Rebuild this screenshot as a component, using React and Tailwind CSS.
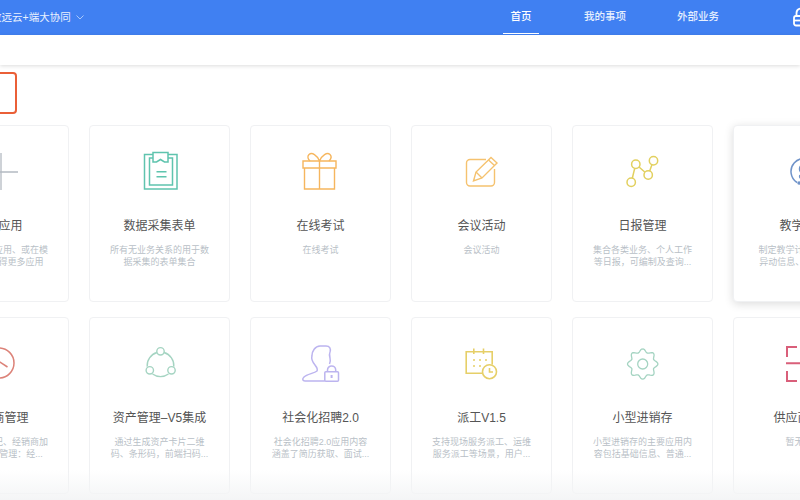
import React from 'react';

// rounded 8 tooth outline for the gear
const gearPath = Array.from({ length: 97 }, (_, i) => {
  const t = (i / 96) * Math.PI * 2;
  const r = 13.5 + 1.7 * Math.cos(8 * t);
  const x = 21.7 + r * Math.sin(t);
  const y = 21 - r * Math.cos(t);
  return `${i === 0 ? 'M' : 'L'}${x.toFixed(2)} ${y.toFixed(2)}`;
}).join('');

// line icons, all drawn on a 44x44 box
const ClipboardIcon = () => (
  <svg width="44" height="44" viewBox="0 0 44 44" className="text-[#5fc4ae]" fill="none" stroke="currentColor" strokeWidth="1.5">
    <path d="M15 3.500H6.500V38H39V3.500H30" />
    <path d="M15 1.500H30V11H26.500L22.500 8.500 18.500 11H15Z" />
    <path d="M15 7H11.500V34H34.500V7H30" />
    <path d="M18.500 20.700h10M18.500 25.700h10" />
  </svg>
);

const GiftIcon = () => (
  <svg width="44" height="44" viewBox="0 0 44 44" className="text-[#f6b65e]" fill="none" stroke="currentColor" strokeWidth="1.4">
    <path d="M4 10H37V17H4Z" />
    <path d="M5.500 17V38H35.500V17" />
    <path d="M20.500 10V38" />
    <path d="M20.500 10C18 4 13 1 10 3.500 8 5.500 9 8 11 10M20.500 10C23 4 28 1 31 3.500 33 5.500 32 8 30 10" />
  </svg>
);

const EditIcon = () => (
  <svg width="44" height="44" viewBox="0 0 44 44" className="text-[#f5c26f]" fill="none" stroke="currentColor" strokeWidth="1.4">
    <path d="M26 8.500H10A3.500 3.500 0 0 0 6.500 12V31.500A3.500 3.500 0 0 0 10 35H31A3.500 3.500 0 0 0 34.500 31.500V18" />
    <path d="M13.500 30L16 21 31 6.500 37 12 22 27Z" />
    <path d="M28.500 9L34.500 14.500M16 21L22 27" />
  </svg>
);

const NodesIcon = () => (
  <svg width="44" height="44" viewBox="0 0 44 44" className="text-[#e2d05f]" fill="none" stroke="currentColor" strokeWidth="1.500">
    <circle cx="10.200" cy="31.300" r="4.200" />
    <circle cx="14.800" cy="13.300" r="4.200" />
    <circle cx="27.200" cy="24" r="4.200" />
    <circle cx="32.500" cy="9.700" r="4.200" />
    <path d="M11.300 27.200L13.700 17.400M18 16L24 21.300M28.700 20L31 13.600" />
  </svg>
);

const TeachIcon = () => (
  <svg width="44" height="44" viewBox="0 0 44 44" className="text-[#6f93c9]" fill="none" stroke="currentColor" strokeWidth="1.500">
    <path d="M15 31.500A13 13 0 1 1 29 31.500" />
    <circle cx="22" cy="18" r="4.500" />
    <path d="M18 24c-1 2 0 4 4 4s5-2 4-4" />
    <circle cx="17" cy="32" r="1" fill="currentColor" />
  </svg>
);

const ClockIcon = () => (
  <svg width="44" height="44" viewBox="0 0 44 44" className="text-[#dc8278]" fill="none" stroke="currentColor" strokeWidth="1.500">
    <circle cx="22" cy="20" r="15" />
    <path d="M22 18.500L30.500 24" />
  </svg>
);

const ShareIcon = () => (
  <svg width="44" height="44" viewBox="0 0 44 44" className="text-[#a5d4c2]" fill="none" stroke="currentColor" strokeWidth="1.400">
    <circle cx="22.500" cy="8.300" r="3.700" />
    <circle cx="11.800" cy="27.300" r="3.700" />
    <circle cx="33.500" cy="27.300" r="3.700" />
    <path d="M19 9.500A13.500 13.500 0 0 0 9.200 23.600M26 9.500A13.500 13.500 0 0 1 35.800 23.600M14.500 31A13.500 13.500 0 0 0 30.500 31" />
  </svg>
);

const UserLockIcon = () => (
  <svg width="44" height="44" viewBox="0 0 44 44" className="text-[#bcb4ef]" fill="none" stroke="currentColor" strokeWidth="1.500">
    <path d="M25.800 38H6c-2.500 0-3-2-1-4 3-3 10-3.500 13-6 1-2 0-3.500-2-6-2.500-3-4-6-3-9.500 0-4 3-9.500 8-9.500h6c4 0 5 3 4 6-1 2-.5 4 0 6 .5 2 .5 4-.5 6" />
    <rect x="25.800" y="28.700" width="13.700" height="9.600" rx="1" />
    <path d="M28.500 28.700v-1.700a4.100 4.100 0 0 1 8.200 0v1.700" />
    <path d="M32.600 32v3" strokeWidth="2" />
  </svg>
);

const CalendarIcon = () => (
  <svg width="44" height="44" viewBox="0 0 44 44" className="text-[#e6cf68]" fill="none" stroke="currentColor" strokeWidth="1.600">
    <path d="M22 30.300H6.200V8.700H32.200V21.500" />
    <path d="M13.800 5.500v5.500M23.500 5.500v5.500" />
    <path d="M13 17h2M19 17h2M25 17h2M13 23h2M19 23h2" />
    <circle cx="29.500" cy="28.700" r="7" />
    <path d="M29.500 25v4h3.500" />
  </svg>
);

const GearIcon = () => (
  <svg width="44" height="44" viewBox="0 0 44 44" className="text-[#a5d4c2]" fill="none" stroke="currentColor" strokeWidth="1.300">
    <path d={gearPath} />
    <circle cx="21.700" cy="21" r="5" />
  </svg>
);

const ScanIcon = () => (
  <svg width="44" height="44" viewBox="0 0 44 44" className="text-[#d95f7a]" fill="none" stroke="currentColor" strokeWidth="2">
    <path d="M15 4H5V14M29 4H39V14M5 28V38H15M29 38H39V28M4 20.300H40" />
  </svg>
);

const PlusIcon = () => (
  <svg width="44" height="44" viewBox="0 0 44 44" className="text-[#b4bac2]" fill="none" stroke="currentColor" strokeWidth="1.300">
    <path d="M24 2V39M7 21H41" />
  </svg>
);

const rows = [
  [
    { icon: PlusIcon, title: '创建应用', desc: ['您可以创建应用、或在模', '板市场中获得更多应用'] },
    { icon: ClipboardIcon, title: '数据采集表单', desc: ['所有无业务关系的用于数', '据采集的表单集合'] },
    { icon: GiftIcon, title: '在线考试', desc: ['在线考试'] },
    { icon: EditIcon, title: '会议活动', desc: ['会议活动'] },
    { icon: NodesIcon, title: '日报管理', desc: ['集合各类业务、个人工作', '等日报，可编制及查询...'] },
    { icon: TeachIcon, title: '教学管理', desc: ['制定教学计划、安排课', '异动信息、成绩管理...'], hover: true },
  ],
  [
    { icon: ClockIcon, title: '经销商管理', desc: ['实现门店登记、经销商加', '盟、门店的管理：经...'] },
    { icon: ShareIcon, title: '资产管理–V5集成', desc: ['通过生成资产卡片二维', '码、条形码，前端扫码...'] },
    { icon: UserLockIcon, title: '社会化招聘2.0', desc: ['社会化招聘2.0应用内容', '涵盖了简历获取、面试...'] },
    { icon: CalendarIcon, title: '派工V1.5', desc: ['支持现场服务派工、运维', '服务派工等场景，用户...'] },
    { icon: GearIcon, title: '小型进销存', desc: ['小型进销存的主要应用内', '容包括基础信息、普通...'] },
    { icon: ScanIcon, title: '供应商管理', desc: ['暂无描述'] },
  ],
];

const AppCard = ({ item }) => {
  const Icon = item.icon;
  return (
    <div
      className={`w-[141px] h-[177px] shrink-0 bg-white rounded border border-[#f0f1f3] flex flex-col items-center pt-[25px] ${
        item.hover ? 'shadow-[0_2px_10px_rgba(0,0,0,0.14)]' : ''
      }`}
    >
      <div className="h-[44px] flex items-center justify-center">
        <Icon />
      </div>
      <h4 className="mt-[22px] text-[12px] leading-[18px] text-[#555] whitespace-nowrap">{item.title}</h4>
      <div className="mt-[10px] text-[9px] leading-[11.500px] text-[#b9bfc7] text-center whitespace-nowrap">
        {item.desc.map((line) => (
          <p key={line}>{line}</p>
        ))}
      </div>
    </div>
  );
};

export default function App() {
  return (
    <div className="w-[800px] h-[500px] overflow-hidden bg-white relative font-['Liberation_Sans','Noto_Sans_CJK_SC',sans-serif]">
      <header className="h-[35px] bg-[#4080f2] flex items-center text-white">
        <div className="flex items-center -ml-[9px] w-[512px] shrink-0">
          <span className="text-[10.500px] text-[#eaf1fe] whitespace-nowrap">致远云+端大协同</span>
          <svg width="8" height="5" viewBox="0 0 8 5" className="ml-[5px] text-[#a9c8fa]" fill="none" stroke="currentColor">
            <path d="M.5.500L4 4l3.500-3.500" />
          </svg>
        </div>
        <nav className="flex items-center h-full pb-[1px] text-[10.500px] font-medium whitespace-nowrap">
          <a className="w-[36px] h-full flex items-center justify-center border-b-[1.500px] border-white">首页</a>
          <a className="ml-[45px] -mt-[1px] text-[#e6effe]">我的事项</a>
          <a className="ml-[51px] -mt-[1px] text-[#e6effe]">外部业务</a>
        </nav>
        <svg width="20" height="20" viewBox="0 0 20 20" className="ml-auto -mr-[13px] -mt-[1px] shrink-0" fill="none" stroke="white" strokeWidth="1.800">
          <path d="M3.500 9V6a4.500 4.500 0 0 1 8.500-2" />
          <rect x="1" y="9" width="17" height="9.500" rx="2" />
          <path d="M1 13.500h17" />
        </svg>
      </header>
      <div className="h-[30px] bg-white shadow-[0_1px_4px_rgba(0,0,0,0.14)]" />
      <div className="mt-[7px] -ml-[20px] w-[37px] h-[42px] rounded border-2 border-[#ea5f37]" />
      <main className="mt-[11px] -ml-[72px] flex flex-col gap-[15px]">
        {rows.map((row, i) => (
          <div key={i} className="flex gap-[20px]">
            {row.map((item) => (
              <AppCard key={item.title} item={item} />
            ))}
          </div>
        ))}
      </main>
      <div className="absolute inset-x-0 bottom-0 h-[30px] bg-gradient-to-b from-transparent to-[#f4f5f6] pointer-events-none" />
    </div>
  );
}
